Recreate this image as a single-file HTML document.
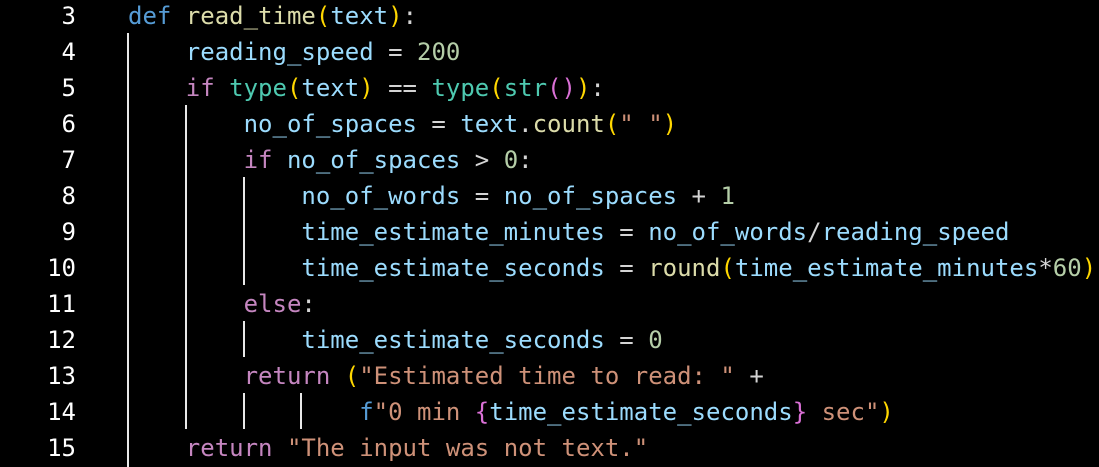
<!DOCTYPE html>
<html><head><meta charset="utf-8"><style>
body{margin:0;width:1099px;height:467px;background:#000;overflow:hidden;position:relative;font-family:"DejaVu Sans Mono","Liberation Mono",monospace;font-size:24px;}
.l{position:absolute;left:128px;height:36px;line-height:36px;white-space:pre;color:#d4d4d4;margin-top:1px}
.n{position:absolute;left:0;width:76px;text-align:right;height:36px;line-height:36px;color:#fff;margin-top:1px}
.g{position:absolute;width:2px;background:#e8e8e8}
.k{color:#569cd6}.f{color:#dcdcaa}.p{color:#ffd700}.v{color:#9cdcfe}.num{color:#b5cea8}
.c{color:#c586c0}.t{color:#4ec9b0}.s{color:#ce9178}.b{color:#da70d6}
</style></head><body>
<div class="n" style="top:-3px">3</div><div class="l" style="top:-3px"><span class="k">def</span> <span class="f">read_time</span><span class="p">(</span><span class="v">text</span><span class="p">)</span>:</div>
<div class="n" style="top:33px">4</div><div class="l" style="top:33px">    <span class="v">reading_speed</span> = <span class="num">200</span></div>
<div class="n" style="top:69px">5</div><div class="l" style="top:69px">    <span class="c">if</span> <span class="t">type</span><span class="p">(</span><span class="v">text</span><span class="p">)</span> == <span class="t">type</span><span class="p">(</span><span class="t">str</span><span class="b">()</span><span class="p">)</span>:</div>
<div class="n" style="top:105px">6</div><div class="l" style="top:105px">        <span class="v">no_of_spaces</span> = <span class="v">text</span>.<span class="f">count</span><span class="p">(</span><span class="s">" "</span><span class="p">)</span></div>
<div class="n" style="top:141px">7</div><div class="l" style="top:141px">        <span class="c">if</span> <span class="v">no_of_spaces</span> &gt; <span class="num">0</span>:</div>
<div class="n" style="top:177px">8</div><div class="l" style="top:177px">            <span class="v">no_of_words</span> = <span class="v">no_of_spaces</span> + <span class="num">1</span></div>
<div class="n" style="top:213px">9</div><div class="l" style="top:213px">            <span class="v">time_estimate_minutes</span> = <span class="v">no_of_words</span>/<span class="v">reading_speed</span></div>
<div class="n" style="top:249px">10</div><div class="l" style="top:249px">            <span class="v">time_estimate_seconds</span> = <span class="f">round</span><span class="p">(</span><span class="v">time_estimate_minutes</span>*<span class="num">60</span><span class="p">)</span></div>
<div class="n" style="top:285px">11</div><div class="l" style="top:285px">        <span class="c">else</span>:</div>
<div class="n" style="top:321px">12</div><div class="l" style="top:321px">            <span class="v">time_estimate_seconds</span> = <span class="num">0</span></div>
<div class="n" style="top:357px">13</div><div class="l" style="top:357px">        <span class="c">return</span> <span class="p">(</span><span class="s">"Estimated time to read: "</span> +</div>
<div class="n" style="top:393px">14</div><div class="l" style="top:393px">                <span class="k">f</span><span class="s">"0 min </span><span class="b">{</span><span class="v">time_estimate_seconds</span><span class="b">}</span><span class="s"> sec"</span><span class="p">)</span></div>
<div class="n" style="top:429px">15</div><div class="l" style="top:429px">    <span class="c">return</span> <span class="s">"The input was not text."</span></div>
<div class="g" style="left:127px;top:33px;height:434px"></div>
<div class="g" style="left:185px;top:105px;height:324px"></div>
<div class="g" style="left:243px;top:177px;height:108px"></div>
<div class="g" style="left:243px;top:321px;height:36px"></div>
<div class="g" style="left:243px;top:393px;height:36px"></div>
<div class="g" style="left:300px;top:393px;height:36px"></div>
</body></html>
